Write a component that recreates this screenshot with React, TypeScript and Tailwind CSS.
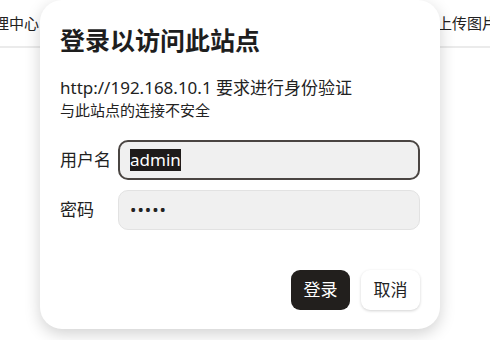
import React from "react";

const font = {
  fontFamily: '"Noto Sans", "Noto Sans CJK SC", sans-serif',
};

const LoginDialog: React.FC = () => {
  return (
    <div className="absolute left-[40px] top-0 w-[400px] rounded-[22px] bg-white px-5 pt-6 pb-[19px] shadow-[0_5px_16px_rgba(0,0,0,0.18)]">
      <h1 className="text-[25px] font-bold leading-[32px] text-[#1e1e1e]">登录以访问此站点</h1>
      <p className="mt-[21px] text-[17px] leading-[22px] text-[#222]">http://192.168.10.1 要求进行身份验证</p>
      <p className="mt-px text-[15px] leading-[20px] text-[#222]">与此站点的连接不安全</p>

      <div className="mt-5 flex flex-col gap-[10px]">
        <div className="flex items-center">
          <label className="w-[58px] text-[17px] text-[#222]">用户名</label>
          <div className="flex h-10 flex-1 items-center rounded-[10px] border-2 border-[#4a4542] bg-[#f0f0f0] pl-[10px]">
            <span className="bg-[#1e1b1a] text-[17px] leading-[22px] text-white">admin</span>
          </div>
        </div>
        <div className="flex items-center">
          <label className="w-[58px] text-[17px] text-[#222]">密码</label>
          <div className="flex h-10 flex-1 items-center rounded-[10px] border border-[#e2e2e2] bg-[#f0f0f0] pl-[11px]">
            <span className="text-[17px] tracking-[1px] text-[#222]">•••••</span>
          </div>
        </div>
      </div>

      <div className="mt-10 flex justify-end gap-[11px]">
        <button className="h-10 w-[59px] rounded-[9px] bg-[#221f1d] text-[17px] text-white">登录</button>
        <button className="h-10 w-[59px] rounded-[9px] bg-white text-[17px] text-[#222] shadow-[0_1px_3px_rgba(0,0,0,0.18)]">取消</button>
      </div>
    </div>
  );
};

export default function App() {
  return (
    <div className="relative h-[340px] w-[490px] overflow-hidden bg-white" style={font}>
      <div className="flex h-12 items-center justify-between border-b-2 border-[#ebebeb]">
        <span className="ml-[-21px] text-[15px] text-[#222]">管理中心</span>
        <span className="mr-[-7px] text-[15px] text-[#222]">上传图片</span>
      </div>
      <LoginDialog />
    </div>
  );
}
